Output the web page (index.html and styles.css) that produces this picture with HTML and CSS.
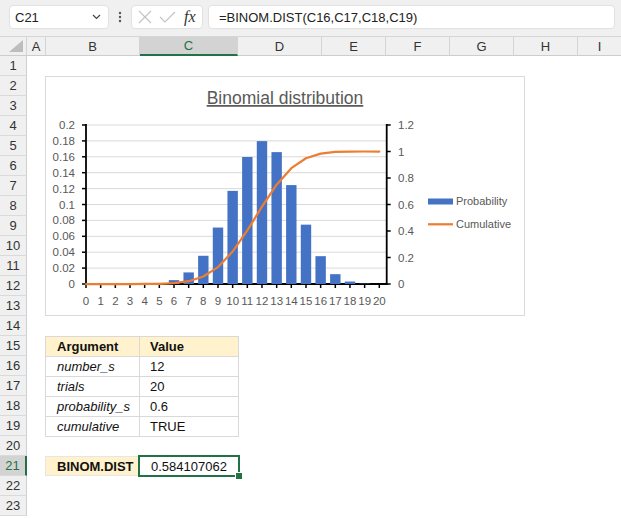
FILE: index.html
```html
<!DOCTYPE html>
<html>
<head>
<meta charset="utf-8">
<link rel="stylesheet" href="styles.css">
</head>
<body>
<div class="topbar">
  <div class="namebox"><span>C21</span>
    <svg width="9" height="6" viewBox="0 0 9 6"><polyline points="1,1 4.5,4.5 8,1" fill="none" stroke="#444" stroke-width="1.2"/></svg>
  </div>
  <div class="more">
    <svg width="4" height="12" viewBox="0 0 4 12"><circle cx="2" cy="2" r="1.2" fill="#555"/><circle cx="2" cy="6" r="1.2" fill="#555"/><circle cx="2" cy="10" r="1.2" fill="#555"/></svg>
  </div>
  <div class="fxbox">
    <svg width="14" height="14" viewBox="0 0 14 14"><path d="M1 1 L13 13 M13 1 L1 13" stroke="#c4c4c4" stroke-width="1.2" fill="none"/></svg>
    <svg width="17" height="12" viewBox="0 0 17 12"><polyline points="1,6 6,11 16,1" stroke="#c4c4c4" stroke-width="1.2" fill="none"/></svg>
    <span class="fx">fx</span>
  </div>
  <div class="formula">=BINOM.DIST(C16,C17,C18,C19)</div>
</div>
<div class="colheads">
  <div class="ch w-corner"><svg width="14" height="12" viewBox="0 0 14 12"><polygon points="14,0 14,12 0,12" fill="#bdbdbd"/></svg></div>
  <div class="ch w-a">A</div>
  <div class="ch w-b">B</div>
  <div class="ch w-c sel">C</div>
  <div class="ch w-d">D</div>
  <div class="ch w-e">E</div>
  <div class="ch w-e">F</div>
  <div class="ch w-e">G</div>
  <div class="ch w-e">H</div>
  <div class="ch w-i">I</div>
</div>
<div class="sheet">
  <div class="rowheads">
    <div class="rh">1</div><div class="rh">2</div><div class="rh">3</div><div class="rh">4</div>
    <div class="rh">5</div><div class="rh">6</div><div class="rh">7</div><div class="rh">8</div>
    <div class="rh">9</div><div class="rh">10</div><div class="rh">11</div><div class="rh">12</div>
    <div class="rh">13</div><div class="rh">14</div><div class="rh">15</div><div class="rh">16</div>
    <div class="rh">17</div><div class="rh">18</div><div class="rh">19</div><div class="rh">20</div>
    <div class="rh sel">21</div><div class="rh">22</div><div class="rh">23</div>
  </div>
  <div class="cells">
    <div class="chart">
      <svg width="478" height="238" viewBox="0 0 478 238">
        <text x="239" y="27" text-anchor="middle" class="title">Binomial distribution</text>
        <g stroke="#d9d9d9" stroke-width="1">
          <line x1="40" y1="191.1" x2="340.7" y2="191.1"/>
          <line x1="40" y1="175.2" x2="340.7" y2="175.2"/>
          <line x1="40" y1="159.3" x2="340.7" y2="159.3"/>
          <line x1="40" y1="143.4" x2="340.7" y2="143.4"/>
          <line x1="40" y1="127.5" x2="340.7" y2="127.5"/>
          <line x1="40" y1="111.6" x2="340.7" y2="111.6"/>
          <line x1="40" y1="95.7" x2="340.7" y2="95.7"/>
          <line x1="40" y1="79.8" x2="340.7" y2="79.8"/>
          <line x1="40" y1="63.9" x2="340.7" y2="63.9"/>
          <line x1="40" y1="48" x2="340.7" y2="48"/>
        </g>
        <g stroke="#000" stroke-width="1.8" fill="none">
          <line x1="40" y1="47" x2="40" y2="208"/>
          <line x1="340.7" y1="47" x2="340.7" y2="208"/>
          <line x1="39" y1="207" x2="341.6" y2="207"/>
        </g>
        <g stroke="#000" stroke-width="1.5">
          <line x1="36" y1="207" x2="40" y2="207"/><line x1="36" y1="191.1" x2="40" y2="191.1"/>
          <line x1="36" y1="175.2" x2="40" y2="175.2"/><line x1="36" y1="159.3" x2="40" y2="159.3"/>
          <line x1="36" y1="143.4" x2="40" y2="143.4"/><line x1="36" y1="127.5" x2="40" y2="127.5"/>
          <line x1="36" y1="111.6" x2="40" y2="111.6"/><line x1="36" y1="95.7" x2="40" y2="95.7"/>
          <line x1="36" y1="79.8" x2="40" y2="79.8"/><line x1="36" y1="63.9" x2="40" y2="63.9"/>
          <line x1="36" y1="48" x2="40" y2="48"/>
          <line x1="340.7" y1="207" x2="344.7" y2="207"/><line x1="340.7" y1="180.5" x2="344.7" y2="180.5"/>
          <line x1="340.7" y1="154" x2="344.7" y2="154"/><line x1="340.7" y1="127.5" x2="344.7" y2="127.5"/>
          <line x1="340.7" y1="101" x2="344.7" y2="101"/><line x1="340.7" y1="74.5" x2="344.7" y2="74.5"/>
          <line x1="340.7" y1="48" x2="344.7" y2="48"/>
          <line x1="40" y1="207" x2="40" y2="211"/><line x1="54.67" y1="207" x2="54.67" y2="211"/>
          <line x1="69.33" y1="207" x2="69.33" y2="211"/><line x1="84" y1="207" x2="84" y2="211"/>
          <line x1="98.66" y1="207" x2="98.66" y2="211"/><line x1="113.33" y1="207" x2="113.33" y2="211"/>
          <line x1="127.99" y1="207" x2="127.99" y2="211"/><line x1="142.66" y1="207" x2="142.66" y2="211"/>
          <line x1="157.32" y1="207" x2="157.32" y2="211"/><line x1="171.99" y1="207" x2="171.99" y2="211"/>
          <line x1="186.65" y1="207" x2="186.65" y2="211"/><line x1="201.32" y1="207" x2="201.32" y2="211"/>
          <line x1="215.98" y1="207" x2="215.98" y2="211"/><line x1="230.65" y1="207" x2="230.65" y2="211"/>
          <line x1="245.31" y1="207" x2="245.31" y2="211"/><line x1="259.98" y1="207" x2="259.98" y2="211"/>
          <line x1="274.64" y1="207" x2="274.64" y2="211"/><line x1="289.31" y1="207" x2="289.31" y2="211"/>
          <line x1="303.97" y1="207" x2="303.97" y2="211"/><line x1="318.64" y1="207" x2="318.64" y2="211"/>
          <line x1="333.3" y1="207" x2="333.3" y2="211"/>
        </g>
        <g fill="#4472c4">
          <rect x="93.46" y="206.79" width="10.4" height="0.21"/>
          <rect x="108.13" y="205.97" width="10.4" height="1.03"/>
          <rect x="122.79" y="203.14" width="10.4" height="3.86"/>
          <rect x="137.46" y="195.42" width="10.4" height="11.58"/>
          <rect x="152.12" y="178.78" width="10.4" height="28.22"/>
          <rect x="166.79" y="150.56" width="10.4" height="56.44"/>
          <rect x="181.45" y="113.87" width="10.4" height="93.13"/>
          <rect x="196.12" y="80.01" width="10.4" height="126.99"/>
          <rect x="210.78" y="64.13" width="10.4" height="142.87"/>
          <rect x="225.45" y="75.12" width="10.4" height="131.88"/>
          <rect x="240.11" y="108.09" width="10.4" height="98.91"/>
          <rect x="254.78" y="147.66" width="10.4" height="59.34"/>
          <rect x="269.44" y="179.18" width="10.4" height="27.82"/>
          <rect x="284.11" y="197.18" width="10.4" height="9.82"/>
          <rect x="298.77" y="204.55" width="10.4" height="2.45"/>
          <rect x="313.44" y="206.61" width="10.4" height="0.39"/>
        </g>
        <polyline fill="none" stroke="#ed7d31" stroke-width="2.25" stroke-linejoin="round" stroke-linecap="round"
          points="40,207 54.67,207 69.33,207 84,207 98.66,206.96 113.33,206.79 127.99,206.14 142.66,204.21 157.32,199.51 171.99,190.1 186.65,174.58 201.32,153.42 215.98,129.61 230.65,107.63 245.31,91.14 259.98,81.25 274.64,76.61 289.31,74.98 303.97,74.57 318.64,74.5 333.3,74.5"/>
        <g class="ax" text-anchor="end">
          <text x="29" y="211">0</text><text x="29" y="195.1">0.02</text>
          <text x="29" y="179.2">0.04</text><text x="29" y="163.3">0.06</text>
          <text x="29" y="147.4">0.08</text><text x="29" y="131.5">0.1</text>
          <text x="29" y="115.6">0.12</text><text x="29" y="99.7">0.14</text>
          <text x="29" y="83.8">0.16</text><text x="29" y="67.9">0.18</text>
          <text x="29" y="52">0.2</text>
        </g>
        <g class="ax" text-anchor="start">
          <text x="352" y="211">0</text><text x="352" y="184.5">0.2</text>
          <text x="352" y="158">0.4</text><text x="352" y="131.5">0.6</text>
          <text x="352" y="105">0.8</text><text x="352" y="78.5">1</text>
          <text x="352" y="52">1.2</text>
        </g>
        <g class="ax" text-anchor="middle">
          <text x="40" y="228">0</text><text x="54.67" y="228">1</text><text x="69.33" y="228">2</text>
          <text x="84" y="228">3</text><text x="98.66" y="228">4</text><text x="113.33" y="228">5</text>
          <text x="127.99" y="228">6</text><text x="142.66" y="228">7</text><text x="157.32" y="228">8</text>
          <text x="171.99" y="228">9</text><text x="186.65" y="228">10</text><text x="201.32" y="228">11</text>
          <text x="215.98" y="228">12</text><text x="230.65" y="228">13</text><text x="245.31" y="228">14</text>
          <text x="259.98" y="228">15</text><text x="274.64" y="228">16</text><text x="289.31" y="228">17</text>
          <text x="303.97" y="228">18</text><text x="318.64" y="228">19</text><text x="333.3" y="228">20</text>
        </g>
        <rect x="382" y="121.5" width="25" height="6" fill="#4472c4"/>
        <text x="410" y="128" class="legend">Probability</text>
        <line x1="382" y1="147.3" x2="407" y2="147.3" stroke="#ed7d31" stroke-width="2.25"/>
        <text x="410" y="151.3" class="legend">Cumulative</text>
      </svg>
    </div>
    <div class="args">
      <div class="cell cb hd">Argument</div><div class="cell cc hd">Value</div>
      <div class="cell cb arg">number_s</div><div class="cell cc">12</div>
      <div class="cell cb arg">trials</div><div class="cell cc">20</div>
      <div class="cell cb arg">probability_s</div><div class="cell cc">0.6</div>
      <div class="cell cb arg">cumulative</div><div class="cell cc">TRUE</div>
    </div>
    <div class="result">
      <div class="rlabel">BINOM.DIST</div>
      <div class="rvalue">0.584107062<div class="selbox"></div><div class="handle"></div></div>
    </div>
  </div>
</div>
</body>
</html>
```
FILE: styles.css
```css
html, body {
  margin: 0;
  padding: 0;
}
body {
  width: 621px;
  height: 518px;
  overflow: hidden;
  background: #fff;
  font-family: "Liberation Sans", Arial, sans-serif;
  font-size: 13px;
  color: #222;
}
.topbar {
  height: 37px;
  box-sizing: border-box;
  background: #f0f0f0;
  border-bottom: 1px solid #d6d6d6;
  display: flex;
  align-items: flex-start;
  padding: 5px 6px 0 9px;
}
.namebox {
  width: 100px;
  height: 24px;
  box-sizing: border-box;
  background: #fff;
  border: 1px solid #e2e2e2;
  border-radius: 4px;
  display: flex;
  align-items: center;
  justify-content: space-between;
  padding: 0 7px 0 5px;
  color: #222;
}
.more {
  width: 22px;
  height: 24px;
  display: flex;
  align-items: center;
  justify-content: center;
}
.fxbox {
  width: 72px;
  height: 24px;
  box-sizing: border-box;
  background: #fff;
  border: 1px solid #e2e2e2;
  border-radius: 4px;
  display: flex;
  align-items: center;
  padding-left: 6px;
  gap: 7px;
}
.fx {
  font-family: "Liberation Serif", "Times New Roman", serif;
  font-style: italic;
  font-size: 16px;
  color: #333;
  margin-left: 1px;
}
.formula {
  flex: 1;
  margin-left: 5px;
  height: 24px;
  box-sizing: border-box;
  background: #fff;
  border: 1px solid #e2e2e2;
  border-radius: 4px;
  display: flex;
  align-items: center;
  padding-left: 10px;
  color: #222;
}
.colheads {
  display: flex;
  height: 19px;
  background: #f0f0f0;
}
.ch {
  box-sizing: border-box;
  height: 19px;
  border-right: 1px solid #d4d4d4;
  border-bottom: 1px solid #cdcdcd;
  display: flex;
  align-items: center;
  justify-content: center;
  color: #333;
  flex: none;
}
.ch.sel {
  background: #d3d3d3;
  color: #217346;
  border-bottom: 2px solid #217346;
}
.w-corner { width: 27px; align-items: flex-end; justify-content: flex-end; padding: 0 3px 3px 0; }
.w-a { width: 19px; }
.w-b { width: 94px; }
.w-c { width: 98px; }
.w-d { width: 84px; }
.w-e { width: 64px; }
.w-i { flex: 1; border-right: none; }
.sheet {
  display: flex;
}
.rowheads {
  width: 27px;
  flex: none;
}
.rh {
  height: 20px;
  box-sizing: border-box;
  background: #f0f0f0;
  border-right: 1px solid #cfcfcf;
  border-bottom: 1px solid #dadada;
  display: flex;
  align-items: center;
  justify-content: center;
  color: #333;
}
.rh.sel {
  background: #d3d3d3;
  color: #217346;
  border-right: 2px solid #217346;
}
.cells {
  flex: 1;
  padding: 20px 0 0 18px;
  display: flex;
  flex-direction: column;
  align-items: flex-start;
}
.chart {
  width: 480px;
  height: 240px;
  box-sizing: border-box;
  border: 1px solid #d9d9d9;
  background: #fff;
}
.chart svg {
  display: block;
}
.title {
  font-family: "Liberation Sans", Arial, sans-serif;
  font-size: 17.5px;
  fill: #595959;
  text-decoration: underline;
}
.ax {
  font-family: "Liberation Sans", Arial, sans-serif;
  font-size: 11.5px;
  fill: #595959;
}
.legend {
  font-family: "Liberation Sans", Arial, sans-serif;
  font-size: 11px;
  fill: #595959;
}
.args {
  margin-top: 20px;
  display: grid;
  grid-template-columns: 94px 99px;
  border-top: 1px solid #d9d9d9;
  border-left: 1px solid #d9d9d9;
}
.cell {
  height: 20px;
  box-sizing: border-box;
  border-right: 1px solid #d9d9d9;
  border-bottom: 1px solid #d9d9d9;
  display: flex;
  align-items: center;
  color: #111;
}
.cb { padding-left: 11px; }
.cc { padding-left: 10px; }
.hd {
  background: #fff2cc;
  font-weight: bold;
}
.arg {
  font-style: italic;
}
.result {
  margin-top: 19px;
  display: flex;
  height: 20px;
}
.rlabel {
  width: 94px;
  height: 20px;
  box-sizing: border-box;
  background: #fff2cc;
  border: 1px solid #e6e6e6;
  border-right: none;
  font-weight: bold;
  padding-left: 11px;
  display: flex;
  align-items: center;
  color: #111;
}
.rvalue {
  position: relative;
  width: 99px;
  height: 20px;
  box-sizing: border-box;
  padding-left: 12px;
  display: flex;
  align-items: center;
  color: #111;
}
.selbox {
  position: absolute;
  left: -1px;
  top: -1px;
  width: 102px;
  height: 22px;
  box-sizing: border-box;
  border: 2px solid #217346;
}
.handle {
  position: absolute;
  left: 97px;
  top: 17px;
  width: 6px;
  height: 6px;
  background: #217346;
  box-shadow: 0 0 0 1px #fff;
}
```
